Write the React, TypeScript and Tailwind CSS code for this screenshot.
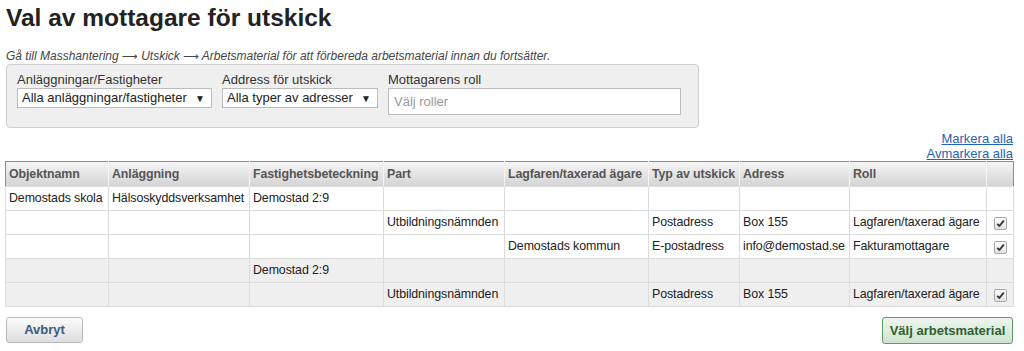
import React from "react";

const cols = [103, 141, 134, 121, 144, 91, 110, 137, 27];
const headers = ["Objektnamn", "Anläggning", "Fastighetsbeteckning", "Part", "Lagfaren/taxerad ägare", "Typ av utskick", "Adress", "Roll", ""];

type Row = { cells: string[]; check: boolean; gray: boolean };
const rows: Row[] = [
  { cells: ["Demostads skola", "Hälsoskyddsverksamhet", "Demostad 2:9", "", "", "", "", ""], check: false, gray: false },
  { cells: ["", "", "", "Utbildningsnämnden", "", "Postadress", "Box 155", "Lagfaren/taxerad ägare"], check: true, gray: false },
  { cells: ["", "", "", "", "Demostads kommun", "E-postadress", "info@demostad.se", "Fakturamottagare"], check: true, gray: false },
  { cells: ["", "", "Demostad 2:9", "", "", "", "", ""], check: false, gray: true },
  { cells: ["", "", "", "Utbildningsnämnden", "", "Postadress", "Box 155", "Lagfaren/taxerad ägare"], check: true, gray: true },
];

function Check() {
  return (
    <span className="inline-flex h-[13px] w-[13px] items-center justify-center rounded-[2px] border border-[#a8a8a8] bg-gradient-to-b from-[#fdfdfd] to-[#e2e2e2]">
      <svg width="9" height="9" viewBox="0 0 9 9">
        <path d="M1.2 4.8 L3.4 7 L7.8 1.6" fill="none" stroke="#333" strokeWidth="1.8" />
      </svg>
    </span>
  );
}

function Arrow() {
  return <span className="font-['DejaVu_Sans',sans-serif] not-italic text-[11px]">⟶</span>;
}

export default function App() {
  return (
    <div className="w-[1024px] h-[351px] overflow-hidden bg-white text-[#333] font-['Liberation_Sans',Arial,sans-serif]">
      <h1 className="pl-[6px] pt-[3px] text-[24.5px] leading-[29px] font-bold text-[#222]">Val av mottagare för utskick</h1>
      <p className="pl-[6px] mt-[17px] text-[12px] leading-[14px] italic text-[#444] whitespace-nowrap">
        Gå till Masshantering <Arrow /> Utskick <Arrow /> Arbetsmaterial för att förbereda arbetsmaterial innan du fortsätter.
      </p>
      <div className="ml-[6px] mt-[0px] w-[693px] h-[64px] rounded-[4px] border border-[#cfcfcf] bg-[#efefef] flex gap-[10px] pl-[10px] pt-[7px]">
        <div className="flex flex-col">
          <label className="text-[13px] leading-[16px] text-[#333]">Anläggningar/Fastigheter</label>
          <div className="mt-[0px] h-[20px] w-[195px] border border-[#bcbcbc] bg-white flex items-center justify-between pl-[4px] pr-[6px] text-[13px] text-[#222]">
            <span>Alla anläggningar/fastigheter</span>
            <span className="text-[10px]">▼</span>
          </div>
        </div>
        <div className="flex flex-col">
          <label className="text-[13px] leading-[16px] text-[#333]">Address för utskick</label>
          <div className="mt-[0px] h-[20px] w-[156px] border border-[#bcbcbc] bg-white flex items-center justify-between pl-[4px] pr-[6px] text-[13px] text-[#222]">
            <span>Alla typer av adresser</span>
            <span className="text-[10px]">▼</span>
          </div>
        </div>
        <div className="flex flex-col">
          <label className="text-[13px] leading-[16px] text-[#333]">Mottagarens roll</label>
          <div className="mt-[0px] h-[27px] w-[293px] border border-[#bcbcbc] bg-white flex items-center pl-[5px] text-[13px] text-[#999]">
            Välj roller
          </div>
        </div>
      </div>
      <div className="flex flex-col items-end pr-[11px] mt-[3px] text-[13px] leading-[15px]">
        <a className="text-[#1f64b5] underline cursor-pointer">Markera alla</a>
        <a className="text-[#1f64b5] underline cursor-pointer">Avmarkera alla</a>
      </div>
      <div className="ml-[5px] mt-[0px] w-[1009px]">
        <table className="table-fixed border-collapse w-[1009px] text-[12.4px] border border-[#8c8c8c]">
          <colgroup>
            {cols.map((w, i) => (
              <col key={i} style={{ width: w }} />
            ))}
          </colgroup>
          <thead>
            <tr className="h-[25px] bg-gradient-to-b from-[#f5f5f5] to-[#d3d3d3]">
              {headers.map((h, i) => (
                <th key={i} className="text-left font-bold text-[#555] px-[3px] whitespace-nowrap overflow-hidden border-l border-[#f5f5f5] first:border-l-0 tracking-[-0.1px]">
                  {h}
                </th>
              ))}
            </tr>
          </thead>
          <tbody>
            {rows.map((r, ri) => (
              <tr key={ri} className={`h-[24px] ${r.gray ? "bg-[#efefef]" : "bg-white"}`}>
                {r.cells.map((c, ci) => (
                  <td key={ci} className="px-[3px] whitespace-nowrap overflow-hidden border border-[#dcdcdc] text-[#222] tracking-[-0.1px]">
                    {c}
                  </td>
                ))}
                <td className="border border-[#dcdcdc] text-center align-middle">
                  {r.check ? <span className="inline-flex align-middle mt-[1px]"><Check /></span> : null}
                </td>
              </tr>
            ))}
          </tbody>
        </table>
      </div>
      <div className="flex justify-between mt-[10px] pl-[6px] pr-[11px]">
        <button className="h-[26px] w-[77px] rounded-[3px] border border-[#b9b9b9] bg-gradient-to-b from-[#fbfbfb] to-[#dedede] text-[13px] font-bold text-[#3b5a7e]">
          Avbryt
        </button>
        <button className="h-[27px] w-[131px] rounded-[3px] border border-[#5f9a6a] bg-gradient-to-b from-[#eef6ee] to-[#cfe3cf] text-[13px] font-bold text-[#2f5f2f]">
          Välj arbetsmaterial
        </button>
      </div>
    </div>
  );
}
